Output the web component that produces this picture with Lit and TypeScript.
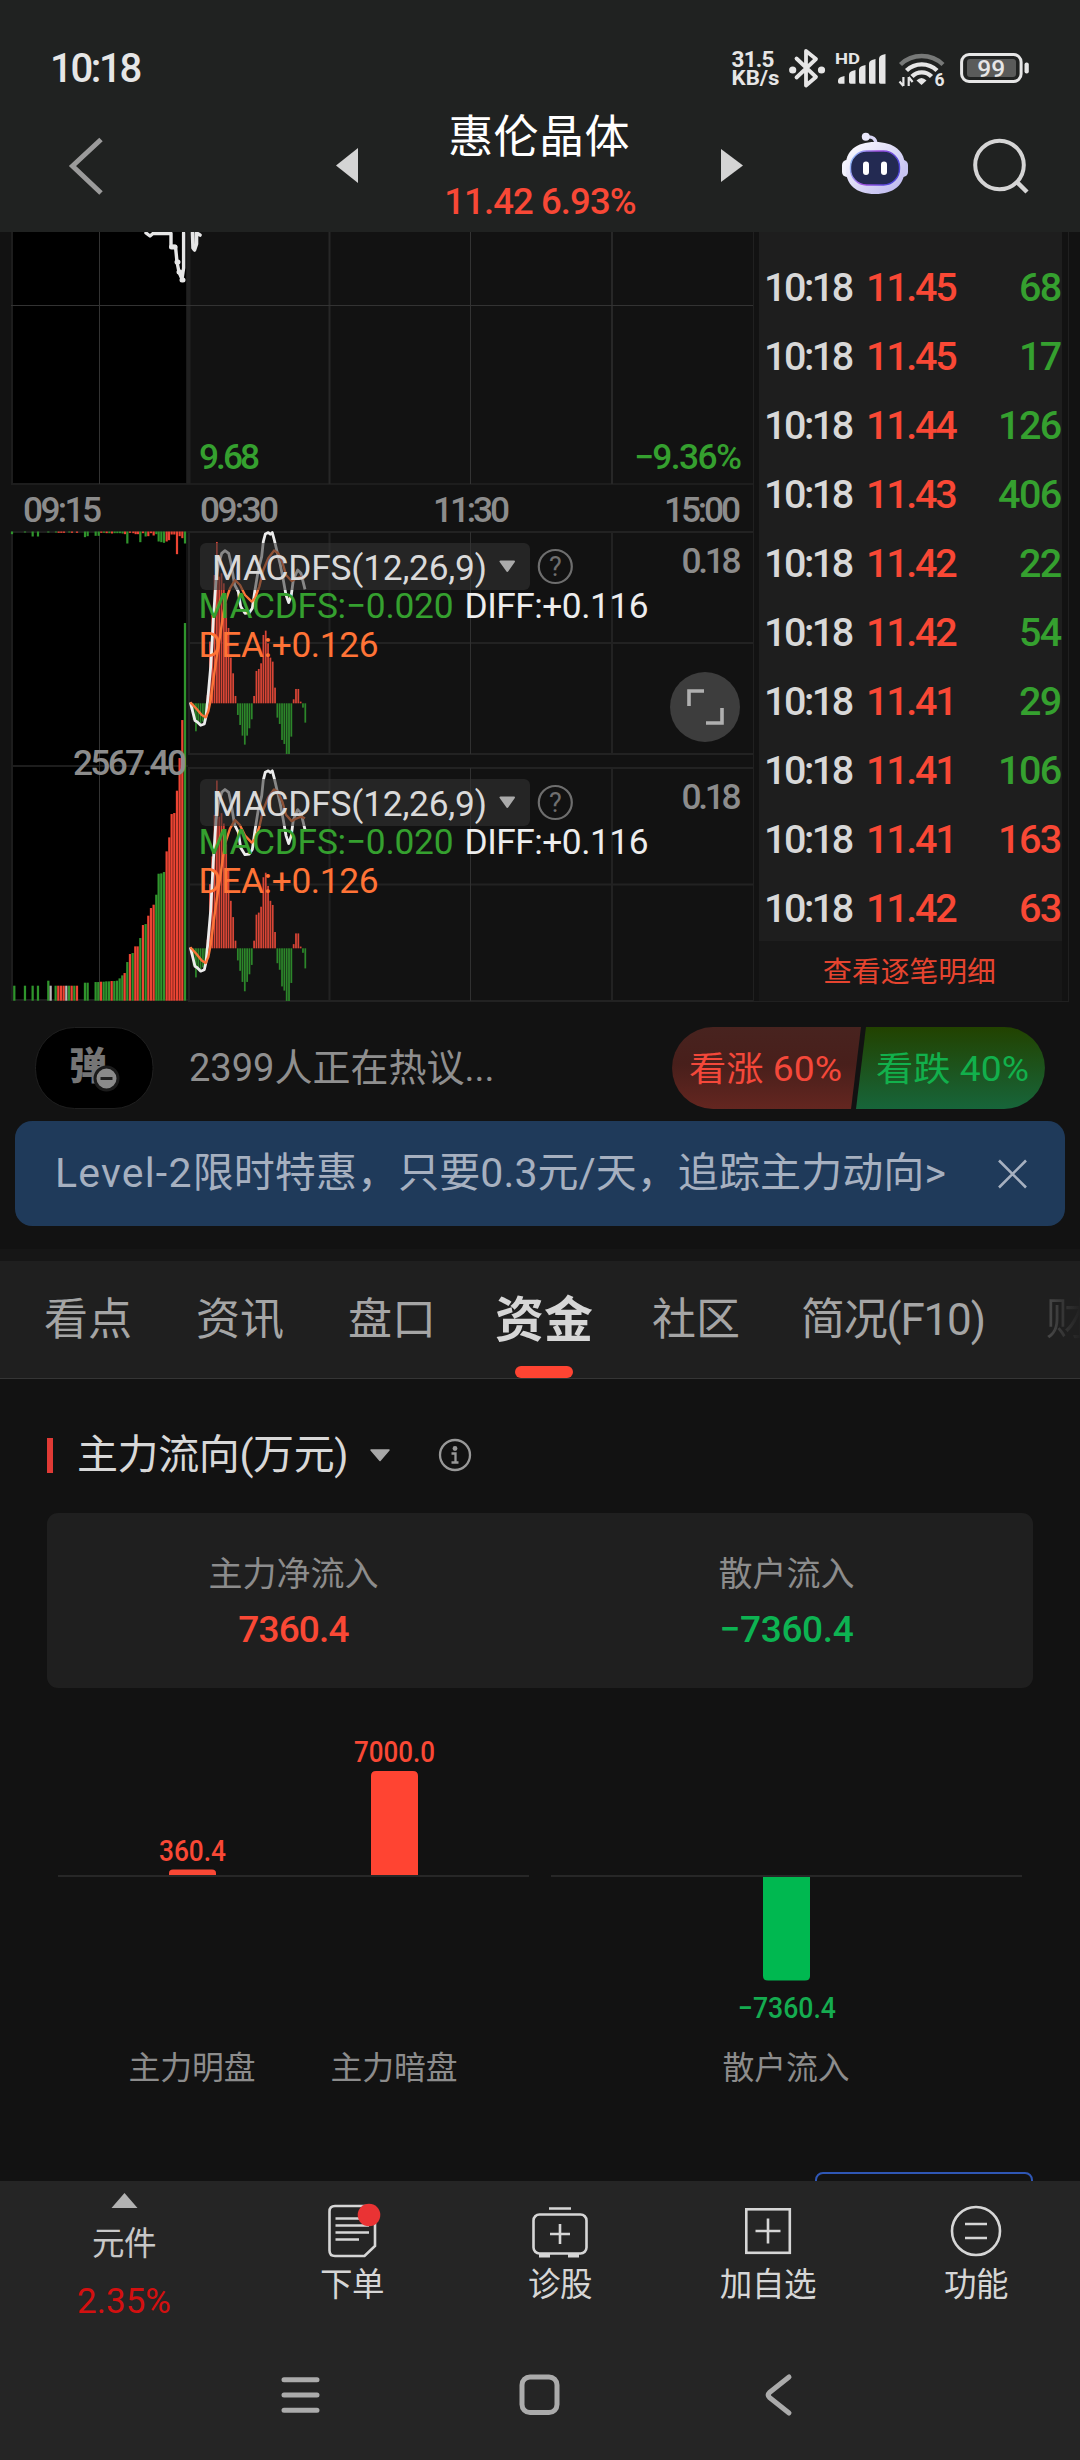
import { LitElement, html, svg, css } from "lit";
import { customElement } from "lit/decorators.js";

type Trade = [time: string, price: string, volume: string, side: "up" | "down"];

const TRADES: Trade[] = [
  ["10:18", "11.46", "66", "down"],
  ["10:18", "11.45", "68", "down"],
  ["10:18", "11.45", "17", "down"],
  ["10:18", "11.44", "126", "down"],
  ["10:18", "11.43", "406", "down"],
  ["10:18", "11.42", "22", "down"],
  ["10:18", "11.42", "54", "down"],
  ["10:18", "11.41", "29", "down"],
  ["10:18", "11.41", "106", "down"],
  ["10:18", "11.41", "163", "up"],
  ["10:18", "11.42", "63", "up"],
];

/* Histogram values of the indicator, one per minute, in thirds of a pixel. */
const MACD = [
  -5, -50, -84, -55, -60, -55, -40, 25, 185, 265, 385, 484, 380, 390, 360, 300, 226, 137, 90, 22,
  -35, -65, -97, -124, -97, -75, -48, 22, 97, 103, 120, 205, 218, 180, 137, 125, 47, -43, -62, -110,
  -122, -152, -152, -100, 12, 43, 43, 5, -13, -58,
];

/* Curve points: x, and height above the zero line, in thirds of a pixel. */
const DIFF: [number, number][] = [
  [571, 3], [578, -25], [585, -52], [592, -56], [602, -66], [613, -62], [618, -40], [624, 20],
  [632, 110], [640, 250], [648, 370], [655, 415], [665, 450], [675, 458], [686, 450], [693, 420],
  [704, 355], [715, 335], [722, 290], [735, 270], [748, 272], [757, 285], [765, 340], [775, 400],
  [785, 440], [790, 485], [796, 508], [805, 512], [811, 507], [817, 512], [823, 490], [830, 460],
  [840, 420], [850, 370], [858, 325], [866, 302], [874, 325], [880, 370], [893, 400], [903, 390],
  [915, 342],
];
const DEA: [number, number][] = [
  [571, 3], [590, -17], [605, -35], [617, -42], [625, -25], [632, 10], [640, 70], [650, 140],
  [660, 200], [670, 270], [678, 310], [690, 345], [705, 370], [720, 355], [735, 325], [755, 305],
  [765, 315], [778, 350], [790, 400], [805, 435], [822, 458], [835, 450], [848, 420], [858, 385],
  [875, 367], [890, 375], [903, 380], [915, 375],
];

/* Opening auction bars: x, height (thirds of a pixel), colour key. */
const AUCTION: [number, number, string][] = [
  [43, 45, "g"], [75, 45, "g"], [98, 45, "g"], [114, 45, "g"], [145, 60, "g"], [152, 45, "w"],
  [167, 45, "g"], [175, 45, "r"], [183, 45, "r"], [191, 45, "r"], [199, 45, "w"], [207, 45, "g"],
  [215, 45, "r"], [223, 45, "g"], [231, 45, "r"], [255, 54, "g"], [263, 54, "g"], [287, 56, "g"],
  [295, 56, "g"], [303, 57, "r"], [311, 57, "g"], [319, 58, "g"], [327, 58, "g"], [335, 59, "r"],
  [343, 59, "g"], [351, 60, "g"], [359, 67, "g"], [367, 76, "g"], [374, 83, "r"], [382, 116, "g"],
  [390, 140, "r"], [398, 143, "g"], [406, 163, "r"], [413, 163, "r"], [421, 188, "g"],
  [429, 227, "r"], [437, 230, "g"], [445, 255, "r"], [453, 278, "r"], [461, 288, "r"],
  [469, 318, "g"], [476, 381, "g"], [484, 382, "g"], [492, 386, "g"], [500, 448, "r"],
  [508, 490, "r"], [515, 560, "r"], [523, 563, "r"], [531, 630, "r"], [539, 728, "r"],
  [547, 842, "r"], [555, 1133, "g"],
];
const UNMATCHED: [number, number, string][] = [
  [36, 8, "g"], [75, 3, "g"], [98, 15, "g"], [114, 15, "g"], [145, 3, "g"], [168, 3, "g"],
  [176, 4, "r"], [184, 4, "r"], [192, 4, "r"], [208, 3, "g"], [216, 4, "r"], [231, 4, "r"],
  [255, 17, "g"], [263, 14, "g"], [287, 13, "g"], [296, 13, "g"], [304, 4, "r"], [312, 4, "g"],
  [320, 5, "r"], [328, 5, "g"], [336, 6, "r"], [344, 5, "g"], [352, 5, "g"], [360, 5, "g"],
  [368, 6, "g"], [375, 8, "r"], [382, 36, "g"], [390, 4, "r"], [400, 5, "r"], [407, 8, "r"],
  [414, 8, "r"], [421, 32, "g"], [429, 5, "r"], [437, 15, "g"], [445, 14, "r"], [453, 5, "r"],
  [461, 12, "r"], [469, 8, "g"], [476, 30, "g"], [484, 32, "g"], [492, 34, "g"], [500, 30, "r"],
  [507, 26, "r"], [515, 9, "r"], [523, 9, "r"], [531, 68, "r"], [539, 14, "r"], [547, 20, "r"],
  [555, 36, "g"],
];
const BAR_FILL: Record<string, string> = { g: "#2f942c", r: "#ec4433", w: "#b9b9b9" };

const FONT = css`Roboto, "Noto Sans CJK SC", sans-serif`;

@customElement("status-bar")
class StatusBar extends LitElement {
  static styles = css`
    :host { display: flex; height: 104px; padding: 0 50px; justify-content: space-between; font-family: ${FONT}; color: #e6e6e6; }
    .time { font-size: 40px; font-weight: 500; line-height: 137px; letter-spacing: -2.3px; }
    svg { display: block; font-family: ${FONT}; }
  `;
  render() {
    const bars = [[838, 76], [849, 70], [859, 65], [869, 59], [879, 54]];
    return html`
      <div class="time">10:18</div>
      <svg width="300" height="104" viewBox="730 0 300 104" fill="#e6e6e6">
        <text x="731.5" y="66.5" font-size="22.5" font-weight="700" textLength="43">31.5</text>
        <text x="731.5" y="85" font-size="21" font-weight="700" textLength="48" lengthAdjust="spacingAndGlyphs">KB/s</text>
        <path d="M796.5 58.5L816 77L806 85.5V51L816 59L796.5 77.5" fill="none" stroke="#e6e6e6" stroke-width="3.8" stroke-linejoin="round" stroke-linecap="round" />
        <circle cx="792.7" cy="70" r="3.6" /><circle cx="821.5" cy="70" r="3.6" />
        <text x="835" y="64" font-size="15.5" font-weight="700" textLength="25" lengthAdjust="spacingAndGlyphs">HD</text>
        ${bars.map(([x, y]) => svg`<path d="M${x} ${y + 5}Q${x} ${y + 2} ${x + 3} ${y + 1}L${x + 6.5} ${y}V83.7H${x + 1.5}Q${x} 83.7 ${x} 82Z" />`)}
        <g fill="none" stroke-width="4.4">
          <path d="M900.5 64.5A31 31 0 0 1 943 64.5" stroke="#777978" />
          <path d="M906.5 70.5A22 22 0 0 1 937 70.5" stroke="#e6e6e6" />
          <path d="M912 76.5A13.5 13.5 0 0 1 931.5 76.5" stroke="#e6e6e6" />
        </g>
        <path d="M916.5 80.5Q921.5 75.5 926.5 80.5L921.5 85Z" />
        <path d="M903.4 77V86M903.4 86L899.5 81.5M908.7 86V77M908.7 77L912.6 82" fill="none" stroke="#e6e6e6" stroke-width="2.2" />
        <text x="934.5" y="86.3" font-size="17.5" font-weight="700">6</text>
        <rect x="961.6" y="54.5" width="59.5" height="27" rx="7.5" fill="none" stroke="#e6e6e6" stroke-width="3" />
        <rect x="967" y="59" width="49" height="18" rx="3" fill="#5a5b5a" />
        <text x="991.3" y="77" font-size="24.5" font-weight="500" text-anchor="middle">99</text>
        <rect x="1024.5" y="62.5" width="4.3" height="11" rx="2" />
      </svg>
    `;
  }
}

@customElement("stock-header")
class StockHeader extends LitElement {
  static styles = css`
    :host { display: flex; height: 128px; font-family: ${FONT}; }
    svg { display: block; flex: none; }
    .back { margin-left: 60px; }
    .prev { margin-left: 226px; }
    .center { width: 362px; display: flex; flex-direction: column; align-items: center; }
    .name { margin-top: 8px; height: 48px; line-height: 51px; font-size: 45px; letter-spacing: 0.4px; margin-right: 2px; color: #fff; font-weight: 400; }
    .quote { height: 44px; margin-top: 19px; line-height: 46px; font-size: 36.5px; letter-spacing: -0.9px; color: #f84836; font-weight: 500; }
    .bot { margin-left: 94px; }
    .search { margin-left: 60px; }
  `;
  render() {
    return html`
      <svg class="back" width="50" height="128" viewBox="60 104 50 128"><path d="M101 139.5L72.5 166L101 193" fill="none" stroke="#9b9b9b" stroke-width="5" /></svg>
      <svg class="prev" width="23" height="128" viewBox="336 104 23 128"><path d="M336 165.5L358 148V183Z" fill="#d4d4d4" /></svg>
      <div class="center">
        <div class="name">惠伦晶体</div>
        <div class="quote">11.42 6.93%</div>
      </div>
      <svg width="23" height="128" viewBox="721 104 23 128"><path d="M743 165.5L721 149V182Z" fill="#d4d4d4" /></svg>
      <svg class="bot" width="72" height="128" viewBox="838 104 72 128">
        <defs>
          <linearGradient id="shell" x1="0" y1="0" x2="1" y2="1"><stop offset="0" stop-color="#fff" /><stop offset="1" stop-color="#b9b4ee" /></linearGradient>
          <linearGradient id="rim" x1="0" y1="0" x2="1" y2="0.3"><stop offset="0" stop-color="#8fd0ff" /><stop offset="0.5" stop-color="#a04fe0" /><stop offset="1" stop-color="#4f46d8" /></linearGradient>
        </defs>
        <path d="M867 137Q875.5 136 876 144" fill="none" stroke="#d8d6f4" stroke-width="3.4" />
        <circle cx="865.8" cy="136.8" r="4" fill="#e9e8fb" />
        <rect x="842" y="160" width="10" height="17" rx="5" fill="#f2f2fc" />
        <rect x="898" y="160" width="10" height="17" rx="5" fill="#c9c6f2" />
        <path d="M875 142C894 142 905 151 905 167C905 185 894 194 875 194C856 194 845.5 185 845.5 167C845.5 151 856 142 875 142Z" fill="url(#shell)" />
        <rect x="850.5" y="151" width="49" height="34" rx="16" fill="#232a52" stroke="url(#rim)" stroke-width="1.4" />
        <rect x="863" y="161.5" width="6" height="13.5" rx="3" fill="#fff" />
        <rect x="881" y="161.5" width="6" height="13.5" rx="3" fill="#fff" />
      </svg>
      <svg class="search" width="60" height="128" viewBox="970 104 60 128">
        <circle cx="999.5" cy="165" r="24.3" fill="none" stroke="#d5d5d5" stroke-width="4" />
        <path d="M1017 182L1027 192" stroke="#d5d5d5" stroke-width="4.5" />
      </svg>
    `;
  }
}

@customElement("minute-chart")
class MinuteChart extends LitElement {
  static styles = css`
    :host { display: block; width: 753px; height: 771px; }
    svg { display: block; font-family: ${FONT}; font-size: 35.3px; }
    .axis { fill: #8c8c8c; font-weight: 500; }
    .limit { fill: #35a02f; font-weight: 500; }
  `;
  private curve(points: [number, number][], zero: number, scale: number) {
    return points.map(([x, v]) => `${(x / 3).toFixed(1)},${(zero - (v * scale) / 3).toFixed(1)}`).join(" ");
  }
  private macd(zero: number, scale: number, top: number, mid: number, bottom: number) {
    const t = top + 11;
    return svg`
      <g fill="none" stroke="#222" stroke-width="2">
        <path d="M188 ${top}H753M188 ${bottom}H753M189 ${top}V${bottom}M329.5 ${top}V${bottom}M612 ${top}V${bottom}M188 ${mid}H753" />
        <path d="M470.5 ${top}V${bottom}" stroke="#303030" stroke-width="1" />
      </g>
      ${MACD.map((v, i) => {
        const h = (Math.abs(v) * scale) / 3;
        return svg`<rect x=${190.4 + i * 2.327} y=${v > 0 ? zero - h : zero} width="1.75" height=${h} fill=${v > 0 ? "#d94536" : "#2c862a"} />`;
      })}
      <polyline points=${this.curve(DIFF, zero, scale)} fill="none" stroke="#ececec" stroke-width="2.8" stroke-linejoin="round" />
      <polyline points=${this.curve(DEA, zero, scale)} fill="none" stroke="#fb7439" stroke-width="2.4" stroke-linejoin="round" />
      <rect x="200" y=${t} width="330" height="47" rx="6" fill="#353535" fill-opacity="0.55" />
      <text x="212" y=${t + 36.5} fill="#dadada" textLength="275">MACDFS(12,26,9)</text>
      <path d="M500.5 ${t + 18.5}H514L507.3 ${t + 28}Z" fill="#aaa" stroke="#aaa" stroke-width="2" stroke-linejoin="round" />
      <circle cx="555.3" cy=${t + 23.5} r="16.5" fill="none" stroke="#6e6e6e" stroke-width="2.2" />
      <text x="555.3" y=${t + 33} fill="#6e6e6e" text-anchor="middle" font-size="27">?</text>
      <text class="axis" x="681.5" y=${t + 30} textLength="60">0.18</text>
      <text x="198.5" y=${t + 75} fill="#35a02f" textLength="255">MACDFS:−0.020</text>
      <text x="464.5" y=${t + 75} fill="#ededed" textLength="184">DIFF:+0.116</text>
      <text x="198.5" y=${t + 113.5} fill="#ff7336" textLength="180">DEA:+0.126</text>
    `;
  }
  render() {
    return html`
      <svg width="753" height="771" viewBox="0 232 753 771">
        <rect x="13" y="232" width="173" height="251" fill="#000" />
        <rect x="13" y="533" width="173" height="467" fill="#000" />
        <g fill="none" stroke="#1d1d1d" stroke-width="2">
          <path d="M12 232V484M11 484H753M12 532V1000M11 532H188M11 766H188M11 1000H188" />
          <path d="M188.5 232V484" stroke="#202020" stroke-width="4" />
          <path d="M329.5 232V484M612 232V484" stroke="#272727" />
          <path d="M11 305.5H753M99.5 232V484M99.5 532V1000M470.5 232V484" stroke="#333" stroke-width="1" />
        </g>
        <g fill="none" stroke="#e6e6e6" stroke-width="3.4" stroke-linejoin="round" stroke-linecap="round">
          <path d="M146 233L150 236L153 233.5H171V246.5H175.5L177 262L179 272L182 279L183.6 268V233" />
          <path d="M192.5 233L193 248L194.5 250L196.5 244V233M196.5 233L200 235" stroke-width="3.6" />
          <path d="M171.500 247H175M177 262H178M179 272H180M182 280H183" stroke-width="5" />
        </g>
        <text class="limit" x="199" y="468.5" textLength="61">9.68</text>
        <text class="limit" x="742" y="468.5" text-anchor="end" textLength="108">−9.36%</text>
        <text class="axis" x="23" y="522.3" textLength="79">09:15</text>
        <text class="axis" x="200" y="522.3" textLength="79">09:30</text>
        <text class="axis" x="433" y="522.3" textLength="77">11:30</text>
        <text class="axis" x="664" y="522.3" textLength="77">15:00</text>
        ${UNMATCHED.map(([x, h, c]) => svg`<rect x=${x / 3 - 1.1} y="531.5" width="2.2" height=${h / 3} fill=${BAR_FILL[c]} />`)}
        ${AUCTION.map(([x, h, c]) => svg`<rect x=${x / 3 - 1.15} y=${1000.7 - h / 3} width="2.25" height=${h / 3} fill=${BAR_FILL[c]} />`)}
        <text class="axis" x="73" y="775" textLength="114">2567.40</text>
        ${this.macd(703.3, 1, 532, 643, 754)}
        ${this.macd(948.3, 1.04, 768, 884.5, 1001)}
        <circle cx="705" cy="707" r="35" fill="#3d3d3d" />
        <path d="M689 706V691H704M722 708V723H706" fill="none" stroke="#b0b0b0" stroke-width="3.6" />
      </svg>
    `;
  }
}

@customElement("trade-list")
class TradeList extends LitElement {
  static styles = css`
    :host { display: flex; flex-direction: column; box-sizing: border-box; width: 316px; height: 770px; padding: 0 6px 0 5px; border: 1px solid #202020; border-top: 0; font-family: ${FONT}; }
    .rows { height: 709px; overflow: hidden; background: #1e1e1e; display: flex; flex-direction: column; justify-content: flex-end; }
    .row { flex: none; height: 69px; line-height: 74px; display: flex; padding: 0 3px 0 5px; font-size: 39.5px; font-weight: 500; color: #d8d8d8; }
    .time { width: 102px; letter-spacing: -2.5px; }
    .price { letter-spacing: -2.3px; }
    .volume { margin-left: auto; margin-right: -1.6px; letter-spacing: -1.6px; }
    .up { color: #f94835; }
    .down { color: #35a02f; }
    .more { height: 60px; line-height: 62px; padding-right: 2px; background: #171717; text-align: center; font-size: 28.8px; color: #e6442f; }
  `;
  render() {
    return html`
      <div class="rows">
        ${TRADES.map(([time, price, volume, side]) => html`
          <div class="row">
            <span class="time">${time}</span><span class="price up">${price}</span><span class="volume ${side}">${volume}</span>
          </div>`)}
      </div>
      <div class="more">查看逐笔明细</div>
    `;
  }
}

@customElement("discussion-bar")
class DiscussionBar extends LitElement {
  static styles = css`
    :host { display: flex; height: 118px; padding-top: 24px; box-sizing: border-box; font-family: ${FONT}; }
    svg { display: block; flex: none; }
    .danmu { margin-left: 35px; }
    .talk { margin-left: 35px; width: 483px; height: 82px; line-height: 82px; font-size: 38px; color: #8f8f8f; white-space: nowrap; }
  `;
  render() {
    return html`
      <svg class="danmu" width="119" height="82" viewBox="35 1027 119 82">
        <rect x="35.5" y="1027.5" width="117.5" height="81" rx="39" fill="#000" stroke="#1f1f1f" />
        <text x="69" y="1079" font-size="38" font-weight="900" fill="#757575" font-family="Noto Sans CJK SC, sans-serif">弹</text>
        <circle cx="106.5" cy="1078.5" r="11.5" fill="#8b8b8b" stroke="#1b1b1b" stroke-width="3" />
        <path d="M100.5 1078.5H112.5" stroke="#222" stroke-width="3" />
      </svg>
      <div class="talk">2399人正在热议...</div>
      <svg width="375" height="82" viewBox="672 1027 375 82" font-family="Roboto, Noto Sans CJK SC, sans-serif">
        <defs>
          <linearGradient id="bull" x1="0" y1="0" x2="0" y2="1"><stop offset="0" stop-color="#48231f" /><stop offset="0.45" stop-color="#481f1b" /><stop offset="1" stop-color="#642620" /></linearGradient>
          <linearGradient id="bear" x1="0" y1="0" x2="0" y2="1"><stop offset="0" stop-color="#224200" /><stop offset="1" stop-color="#17653a" /></linearGradient>
        </defs>
        <path d="M713 1027H861L851 1109H713A41 41 0 0 1 713 1027Z" fill="url(#bull)" />
        <path d="M866 1027H1004A41 41 0 0 1 1004 1109H856Z" fill="url(#bear)" />
        <text x="689" y="1081" font-size="34.5" fill="#f4483a" textLength="153" lengthAdjust="spacingAndGlyphs">看涨 60%</text>
        <text x="876" y="1081" font-size="34.5" fill="#12b04c" textLength="153" lengthAdjust="spacingAndGlyphs">看跌 40%</text>
      </svg>
    `;
  }
}

@customElement("promo-banner")
class PromoBanner extends LitElement {
  static styles = css`
    :host { display: flex; align-items: center; margin: 0 15px; height: 105px; border-radius: 17px; background: #1f3a5a; font-family: ${FONT}; }
    .copy { margin-left: 40px; width: 942px; line-height: 105px; font-size: 41px; letter-spacing: 0.1px; color: #a6b0c0; white-space: nowrap; }
    .latin { letter-spacing: 1.2px; }
    svg { display: block; flex: none; }
  `;
  render() {
    return html`
      <div class="copy"><span class="latin">Level-2</span>限时特惠，只要0.3元/天，追踪主力动向&gt;</div>
      <svg width="32" height="32" viewBox="0 0 32 32"><path d="M2 2.5L29 29.5M29 2.5L2 29.5" stroke="#a6b0c0" stroke-width="2.6" /></svg>
    `;
  }
}

@customElement("section-tabs")
class SectionTabs extends LitElement {
  static styles = css`
    :host { display: flex; box-sizing: border-box; height: 130px; margin-top: 23px; border-top: 12px solid #161616; border-bottom: 1px solid #353535; background: #1f1f1f; padding-left: 44px; gap: 64px; overflow: hidden; font-family: ${FONT}; }
    .tab { flex: none; display: flex; flex-direction: column; justify-content: space-between; align-items: center; line-height: 119px; font-size: 44px; color: #a5a5a5; white-space: nowrap; }
    .label { height: 105px; }
    .active { margin: 0 -5px; font-size: 49px; font-weight: 600; color: #d6d6d6; }
    .mark { width: 58px; height: 12px; border-radius: 6px; background: #ff4432; }
    .long { margin: 0 -3px; letter-spacing: -1.2px; }
    .faded { background: linear-gradient(90deg, #4a4a4a, #1f1f1f 36px); background-clip: text; -webkit-background-clip: text; color: transparent; }
  `;
  render() {
    return html`
      <div class="tab"><span class="label">看点</span></div>
      <div class="tab"><span class="label">资讯</span></div>
      <div class="tab"><span class="label">盘口</span></div>
      <div class="tab active"><span class="label">资金</span><span class="mark"></span></div>
      <div class="tab"><span class="label">社区</span></div>
      <div class="tab long"><span class="label">简况(F10)</span></div>
      <div class="tab faded"><span class="label">财务</span></div>
    `;
  }
}

@customElement("capital-flow")
class CapitalFlow extends LitElement {
  static styles = css`
    :host { display: flex; flex-direction: column; height: 802px; overflow: hidden; font-family: ${FONT}; }
    .head { flex: none; display: flex; align-items: center; height: 84px; margin-top: 34px; padding-left: 47px; }
    .bar { width: 6px; height: 35px; background: #e03a35; }
    .title { margin-left: 24px; width: 292px; line-height: 84px; font-size: 41px; letter-spacing: -0.4px; color: #d8d8d8; }
    .info { margin-left: 47px; }
    .card { flex: none; display: flex; height: 175px; margin: 16px 47px 0; border-radius: 11px; background: #1f1f1f; }
    .cell { flex: 1; display: flex; flex-direction: column; align-items: center; padding-top: 36px; }
    .label { height: 50px; line-height: 50px; font-size: 34px; color: #8c8c8c; }
    .value { margin-top: 5px; height: 50px; line-height: 52px; font-size: 37px; font-weight: 500; letter-spacing: -0.8px; }
    .up { color: #f94835; }
    .down { color: #0db352; letter-spacing: -0.3px; }
    svg { display: block; flex: none; }
    .chart { font-family: ${FONT}; font-size: 29.5px; font-weight: 500; text-anchor: middle; }
    .name { font-size: 31.8px; font-weight: 400; fill: #8c8c8c; }
    .link { flex: none; box-sizing: border-box; width: 218px; height: 60px; margin: 44px 47px 0 auto; border: 2px solid #2f57b5; border-radius: 8px; }
  `;
  render() {
    return html`
      <div class="head">
        <span class="bar"></span>
        <span class="title">主力流向(万元)</span>
        <svg width="22" height="15" viewBox="0 0 22 15"><path d="M2 2H20L11 12.5Z" fill="#a8a8a8" stroke="#a8a8a8" stroke-width="1.5" stroke-linejoin="round" /></svg>
        <svg class="info" width="34" height="34" viewBox="0 0 34 34">
          <circle cx="17" cy="17" r="15" fill="none" stroke="#989898" stroke-width="2.3" />
          <circle cx="17" cy="10.5" r="2.4" fill="#989898" />
          <path d="M13.5 15.5H17.5V24.5M13.5 24.5H20.5" fill="none" stroke="#989898" stroke-width="2.3" />
        </svg>
      </div>
      <div class="card">
        <div class="cell"><span class="label">主力净流入</span><span class="value up">7360.4</span></div>
        <div class="cell"><span class="label">散户流入</span><span class="value down">−7360.4</span></div>
      </div>
      <svg class="chart" width="1080" height="440" viewBox="0 1688 1080 440">
        <path d="M58 1876H529M551 1876H1022" stroke="#272727" stroke-width="2" />
        <path d="M169 1875V1873Q169 1869.5 173 1869.5H212Q216 1869.5 216 1873V1875Z" fill="#f94835" />
        <path d="M371 1875V1776Q371 1771 376 1771H413Q418 1771 418 1776V1875Z" fill="#ff4432" />
        <path d="M763 1877V1976Q763 1980.5 768 1980.5H805Q810 1980.5 810 1976V1877Z" fill="#00b850" />
        <text x="192.5" y="1860.5" fill="#f94835" textLength="67" lengthAdjust="spacingAndGlyphs">360.4</text>
        <text x="394.5" y="1761.5" fill="#f94835" textLength="81" lengthAdjust="spacingAndGlyphs">7000.0</text>
        <text x="787" y="2018" fill="#15ac50" textLength="98" lengthAdjust="spacingAndGlyphs">−7360.4</text>
        <text class="name" x="192" y="2078.5">主力明盘</text>
        <text class="name" x="394" y="2078.5">主力暗盘</text>
        <text class="name" x="786" y="2078.5">散户流入</text>
      </svg>
      <div class="link"></div>
    `;
  }
}

@customElement("action-bar")
class ActionBar extends LitElement {
  static styles = css`
    :host { display: flex; height: 149px; font-family: ${FONT}; color: #d6d6d6; }
    .item { flex: 1; display: flex; flex-direction: column; align-items: center; font-size: 32.5px; }
    .index { flex: none; width: 248px; color: #c8c8c8; }
    svg { display: block; fill: none; stroke: #d6d6d6; stroke-width: 2.6px; }
    .label { height: 46px; line-height: 48px; letter-spacing: -0.4px; }
    .index .tri { margin-top: 12px; fill: #b2b2b2; stroke: none; }
    .index .label { margin-top: 12px; }
    .pct { margin-top: 12px; height: 48px; line-height: 48px; font-size: 35px; font-weight: 400; color: #d31010; }
    .dot { fill: #ea3334; stroke: none; }
    .solid { fill: #d6d6d6; stroke: none; }
  `;
  render() {
    return html`
      <div class="item index">
        <svg class="tri" width="27" height="15" viewBox="0 0 27 15"><path d="M13.5 0L26.5 15H0.5Z" /></svg>
        <span class="label">元件</span>
        <span class="pct">2.35%</span>
      </div>
      <div class="item">
        <svg width="60" height="80" viewBox="322 2181 60 80">
          <path d="M335 2206H371L375 2210V2246L364.5 2256H335Q329.5 2256 329.5 2250.5V2211.5Q329.5 2206 335 2206Z" />
          <path d="M335.5 2218.5H360M335.5 2225.5H369M335.5 2232.5H369M335.5 2239.5H359" />
          <circle class="dot" cx="369" cy="2215" r="11.3" />
        </svg>
        <span class="label">下单</span>
      </div>
      <div class="item">
        <svg width="60" height="80" viewBox="530 2181 60 80">
          <rect x="533.5" y="2214.5" width="53" height="39" rx="6" />
          <path d="M549 2208.5H571M550 2234H570M560 2224V2244" />
          <path class="solid" d="M539 2254H550V2257.5H539ZM568 2254H579V2257.5H568Z" />
        </svg>
        <span class="label">诊股</span>
      </div>
      <div class="item">
        <svg width="60" height="80" viewBox="738 2181 60 80">
          <rect x="746.3" y="2209.3" width="43.5" height="43.5" />
          <path d="M755.5 2231H780.5M768 2218.5V2243.5" />
        </svg>
        <span class="label">加自选</span>
      </div>
      <div class="item">
        <svg width="60" height="80" viewBox="946 2181 60 80">
          <circle cx="976" cy="2231" r="24" />
          <path d="M965 2224H987M965 2238H987" />
        </svg>
        <span class="label">功能</span>
      </div>
    `;
  }
}

@customElement("system-nav")
class SystemNav extends LitElement {
  static styles = css`
    :host { display: flex; align-items: center; height: 130px; padding-left: 276px; gap: 191px; }
    svg { display: block; fill: none; stroke: #ababab; stroke-width: 5px; stroke-linecap: round; stroke-linejoin: round; }
  `;
  render() {
    return html`
      <svg width="48" height="48" viewBox="276 2371 48 48"><path d="M284 2379.7H317M284 2395H317M284 2410.3H317" /></svg>
      <svg width="48" height="48" viewBox="515 2371 48 48"><rect x="522" y="2377" width="35" height="35.5" rx="8" /></svg>
      <svg width="48" height="48" viewBox="754 2371 48 48"><path d="M789 2377L769.5 2392.5Q767 2395 769.5 2397.5L789 2413" /></svg>
    `;
  }
}

@customElement("app-root")
class AppRoot extends LitElement {
  static styles = css`
    :host { display: block; width: 1080px; height: 2460px; overflow: hidden; background: #121212; }
    .top { background: #202221; height: 232px; }
    .market { display: flex; height: 771px; }
    .bottom { background: #252525; height: 279px; }
  `;
  render() {
    return html`
      <div class="top"><status-bar></status-bar><stock-header></stock-header></div>
      <div class="market"><minute-chart></minute-chart><trade-list></trade-list></div>
      <discussion-bar></discussion-bar>
      <promo-banner></promo-banner>
      <section-tabs></section-tabs>
      <capital-flow></capital-flow>
      <div class="bottom"><action-bar></action-bar><system-nav></system-nav></div>
    `;
  }
}
